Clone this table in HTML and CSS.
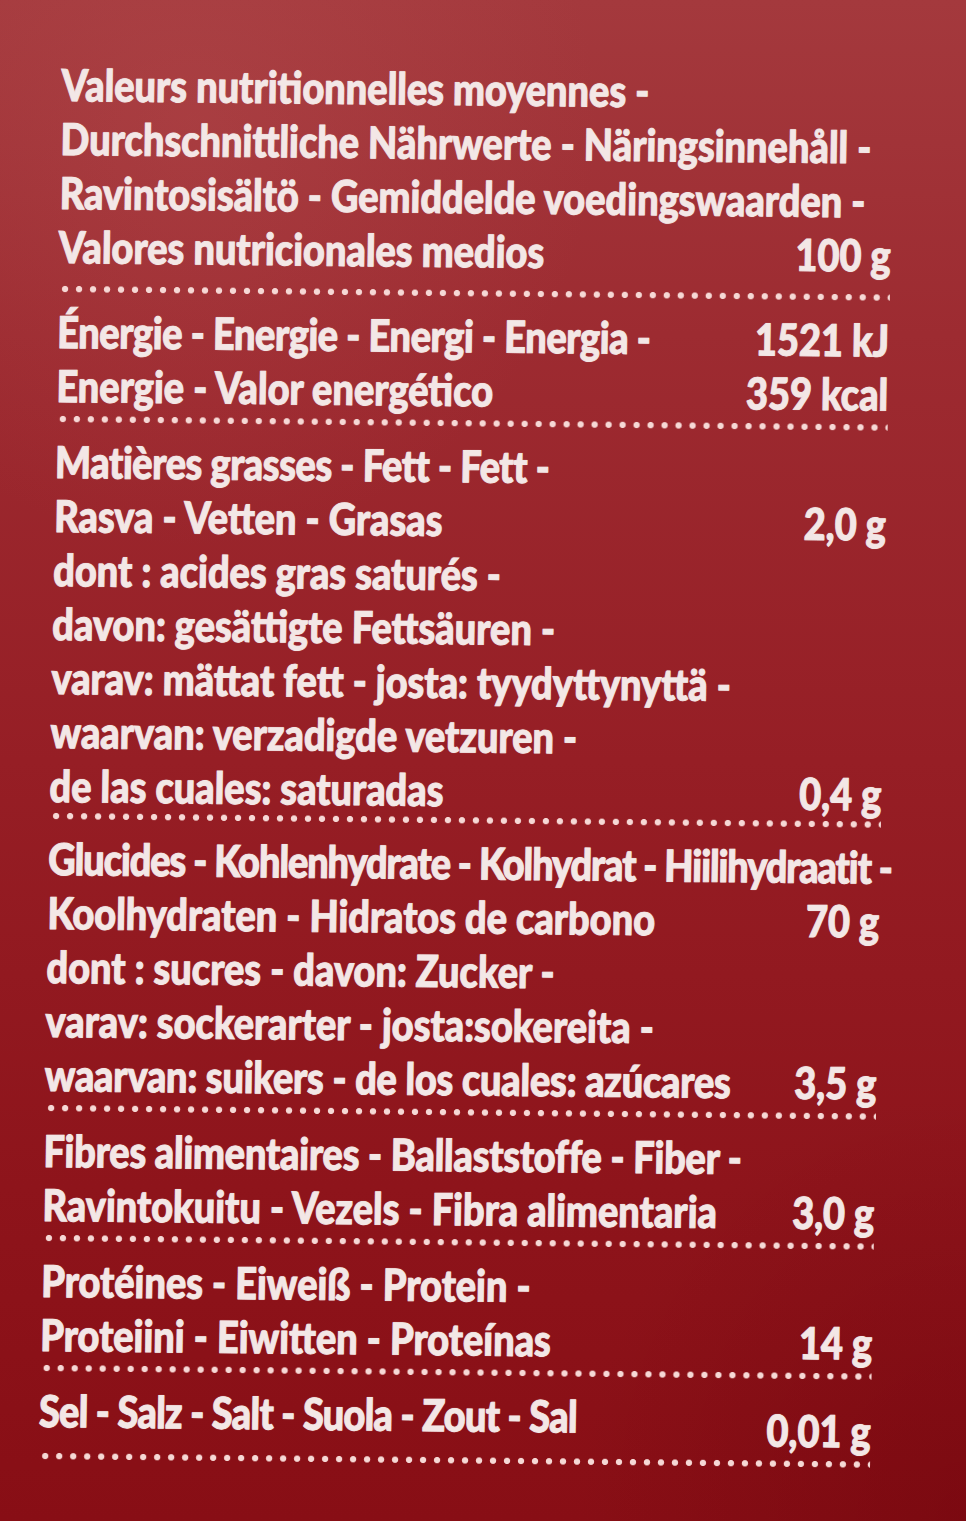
FILE: index.html
```html
<!DOCTYPE html>
<html lang="fr">
<head>
<meta charset="utf-8">
<title>Valeurs nutritionnelles</title>
<link rel="stylesheet" href="styles.css">
</head>
<body>
<main class="label">
  <section class="row head">
    <div class="line">Valeurs nutritionnelles moyennes -</div>
    <div class="line">Durchschnittliche Nährwerte - Näringsinnehåll -</div>
    <div class="line">Ravintosisältö - Gemiddelde voedingswaarden -</div>
    <div class="line"><span>Valores nutricionales medios</span><span class="val">100 g</span></div>
  </section>
  <div class="dots"></div>
  <section class="row energy">
    <div class="line"><span class="snug">Énergie - Energie - Energi - Energia -</span><span class="val">1521 kJ</span></div>
    <div class="line"><span>Energie - Valor energético</span><span class="val">359 kcal</span></div>
  </section>
  <div class="dots"></div>
  <section class="row fat">
    <div class="line"><span class="snug">Matières grasses - Fett - Fett -</span></div>
    <div class="line"><span>Rasva - Vetten - Grasas</span><span class="val">2,0 g</span></div>
    <div class="line">dont : acides gras saturés -</div>
    <div class="line">davon: gesättigte Fettsäuren -</div>
    <div class="line">varav: mättat fett - josta: tyydyttynyttä -</div>
    <div class="line">waarvan: verzadigde vetzuren -</div>
    <div class="line"><span>de las cuales: saturadas</span><span class="val">0,4 g</span></div>
  </section>
  <div class="dots"></div>
  <section class="row">
    <div class="line"><span class="tightest">Glucides - Kohlenhydrate - Kolhydrat - Hiilihydraatit -</span></div>
    <div class="line"><span>Koolhydraten - Hidratos de carbono</span><span class="val">70 g</span></div>
    <div class="line">dont : sucres - davon: Zucker -</div>
    <div class="line">varav: sockerarter - josta:sokereita -</div>
    <div class="line"><span class="slight">waarvan: suikers - de los cuales: azúcares</span><span class="val">3,5 g</span></div>
  </section>
  <div class="dots"></div>
  <section class="row">
    <div class="line"><span class="slight">Fibres alimentaires - Ballaststoffe - Fiber -</span></div>
    <div class="line"><span>Ravintokuitu - Vezels - Fibra alimentaria</span><span class="val">3,0 g</span></div>
  </section>
  <div class="dots"></div>
  <section class="row">
    <div class="line">Protéines - Eiweiß - Protein -</div>
    <div class="line"><span>Proteiini - Eiwitten - Proteínas</span><span class="val">14 g</span></div>
  </section>
  <div class="dots"></div>
  <section class="row salt">
    <div class="line"><span class="tighter">Sel - Salz - Salt - Suola - Zout - Sal</span><span class="val">0,01 g</span></div>
  </section>
  <div class="dots"></div>
</main>
</body>
</html>
```

FILE: styles.css
```css
html, body {
  margin: 0;
  padding: 0;
}

body {
  width: 966px;
  height: 1521px;
  overflow: hidden;
  background:
    radial-gradient(ellipse 60% 40% at 20% 8%, rgba(190, 90, 90, 0.25), transparent 70%),
    radial-gradient(ellipse 50% 35% at 100% 100%, rgba(100, 0, 8, 0.35), transparent 80%),
    linear-gradient(180deg, #a4393d 0%, #9d2b31 22%, #961e25 50%, #8e141b 78%, #880e15 100%);
  font-family: Lato, "DejaVu Sans Condensed", sans-serif;
  font-weight: 900;
  color: #f3e7e6;
}

/* The label is laid out at full width, then squeezed horizontally
   (condensed face of the printed pack) and slightly sheared/tilted
   like the photographed box. */
.label {
  width: 965px;
  margin: 61px 0 0 0;
  transform: matrix(0.862, 0.009, -0.017, 1, 0, 0);
  transform-origin: 449.3px 0;
}

.row {
  padding: 11px 0 3px;
}

.row.head {
  padding: 0 0 12px;
}

.row.fat {
  padding-bottom: 0;
}

.line {
  display: flex;
  justify-content: space-between;
  align-items: baseline;
  font-size: 44px;
  line-height: 54px;
  white-space: nowrap;
  -webkit-text-stroke: 0.9px #f3e7e6;
  text-shadow: 0 0 1.5px rgba(243, 231, 230, 0.55);
}

.val {
  text-align: right;
}

.slight {
  letter-spacing: -0.25px;
}

.snug {
  letter-spacing: -0.5px;
}

.tighter {
  letter-spacing: -0.85px;
}

.tightest {
  letter-spacing: -1.25px;
}

.salt .line {
  align-items: flex-start;
}

.salt .val {
  padding-top: 12px;
}

.dots {
  height: 8px;
  background-image: radial-gradient(4.2px 3.6px at 50% 50%, #f6d8d5 78%, rgba(246, 216, 213, 0) 100%);
  background-size: 16.24px 8px;
  background-repeat: repeat-x;
  background-position: 0 0;
}
```
